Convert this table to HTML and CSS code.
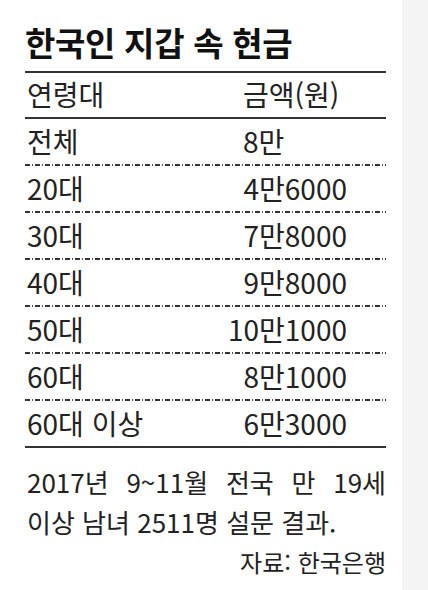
FILE: index.html
```html
<!DOCTYPE html>
<html lang="ko">
<head>
    <meta charset="UTF-8">
    <meta name="viewport" content="width=device-width, initial-scale=1.0">
    <title>한국인 지갑 속 현금</title>
    <link rel="stylesheet" href="styles.css">
</head>
<body>
    <div class="page">
        <div class="card">
            <h1 class="title">한국인 지갑 속 현금</h1>

            <div class="table">
                <div class="row head-row">
                    <span class="age">연령대</span>
                    <span class="amount amount-left">금액(원)</span>
                </div>
                <div class="row">
                    <span class="age">전체</span>
                    <span class="amount amount-left">8만</span>
                </div>
                <div class="row">
                    <span class="age">20대</span>
                    <span class="amount">4만6000</span>
                </div>
                <div class="row">
                    <span class="age">30대</span>
                    <span class="amount">7만8000</span>
                </div>
                <div class="row">
                    <span class="age">40대</span>
                    <span class="amount">9만8000</span>
                </div>
                <div class="row">
                    <span class="age">50대</span>
                    <span class="amount">10만1000</span>
                </div>
                <div class="row">
                    <span class="age">60대</span>
                    <span class="amount">8만1000</span>
                </div>
                <div class="row last-row">
                    <span class="age">60대 이상</span>
                    <span class="amount">6만3000</span>
                </div>
            </div>

            <div class="note">
                <div class="note-line justified">2017년 9~11월 전국 만 19세</div>
                <div class="note-line">이상 남녀 2511명 설문 결과.</div>
            </div>
            <div class="source">자료: 한국은행</div>
        </div>
        <div class="side"></div>
    </div>
</body>
</html>
```

FILE: styles.css
```css
* {
    margin: 0;
    padding: 0;
    box-sizing: border-box;
    font-family: 'Noto Sans CJK KR', 'Noto Sans', sans-serif;
}

body {
    background-color: #f4f4f4;
    color: #222;
}

.page {
    display: flex;
    height: 590px;
}

.card {
    width: 402px;
    background-color: white;
    padding: 0 16px 0 25px;
}

.side {
    flex: 1;
    background-color: #f4f4f4;
}

.title {
    font-size: 33px;
    font-weight: bold;
    color: #111;
    line-height: 44px;
    padding-top: 20px;
    height: 71px;
    letter-spacing: -0.3px;
}

.table {
    border-top: 2px solid #333;
    border-bottom: 2px solid #333;
}

.row {
    display: flex;
    align-items: center;
    height: 47px;
    font-size: 28px;
    line-height: 45px;
    padding-bottom: 2px;
    background-image: repeating-linear-gradient(90deg, #333 0, #333 5px, transparent 5px, transparent 7px, #555 7px, #555 8px, transparent 8px, transparent 10px);
    background-size: 100% 2px;
    background-position: bottom left;
    background-repeat: no-repeat;
}

.head-row {
    height: 46px;
    background-image: none;
    border-bottom: 2px solid #333;
}

.last-row {
    background-image: none;
    height: 45px;
    padding-bottom: 0;
}

.age {
    width: 200px;
    padding-left: 2px;
}

.amount {
    width: 122px;
    text-align: right;
    white-space: nowrap;
}

.amount-left {
    text-align: left;
    padding-left: 18px;
}

.note {
    font-size: 26px;
    line-height: 40px;
    padding-top: 14px;
    padding-left: 2px;
}

.justified {
    text-align: justify;
    text-align-last: justify;
}

.source {
    font-size: 24px;
    line-height: 40px;
    text-align: right;
}
```
